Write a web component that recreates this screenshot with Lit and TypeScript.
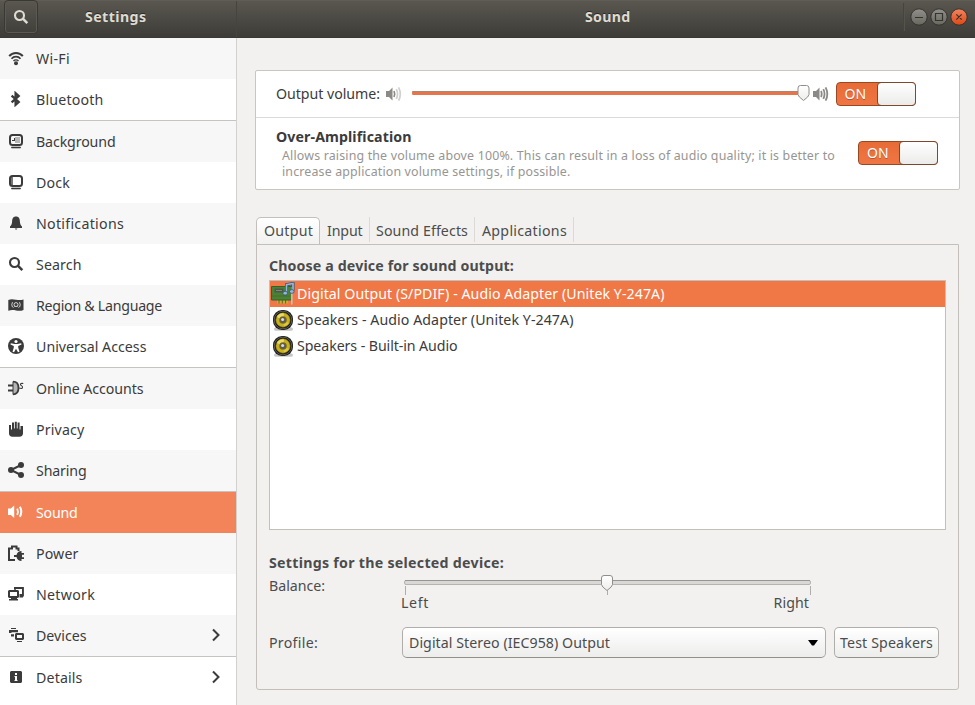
import { LitElement, html, svg, css, nothing } from "lit";
import { customElement, property } from "lit/decorators.js";

/** A single line of text, tracked so that it spans the given width. */
@customElement("fit-label")
class FitLabel extends LitElement {
  @property() text = "";
  @property({ type: Number }) w = 0;
  static styles = css`
    :host { display: inline-block; white-space: pre; flex: none; }
    .t { display: inline-block; }
  `;
  updated() {
    const t = this.renderRoot.querySelector(".t") as HTMLElement;
    t.style.letterSpacing = "0px";
    const natural = t.getBoundingClientRect().width;
    t.style.letterSpacing = (this.w - 1 - natural) / this.text.length + "px";
  }
  render() {
    return html`<span class="t">${this.text}</span>`;
  }
}

const icons: Record<string, unknown> = {
  wifi: svg`<g fill="none" stroke="currentColor"><path d="M1.200 6.200C4.600 2 11.400 2 14.800 6.200" stroke-width="2"/><path d="M3.500 8.700C5.900 5.900 10.100 5.900 12.500 8.700" stroke-width="1.700"/><path d="M5.500 11C6.800 9.400 9.200 9.400 10.500 11" stroke-width="1.300"/></g><circle cx="8" cy="13.200" r="2"/>`,
  bluetooth: svg`<path d="M3.600 4.600 10.700 11 7.600 13.800V2.200L10.700 5 3.600 11.400" fill="none" stroke="currentColor" stroke-width="2.300"/>`,
  background: svg`<rect x="2" y="2" width="12" height="10" rx="2.500" fill="none" stroke="currentColor" stroke-width="2"/><path d="M7 4h5v6H7z" opacity=".35"/><path d="M4 8h3V5H6v2H4z"/><path d="M3.500 14h9v1h-9z" stroke="currentColor" stroke-width=".6"/>`,
  dock: svg`<rect x="2" y="2" width="12" height="10" rx="2.500" fill="none" stroke="currentColor" stroke-width="2"/><path d="M3 3h2v8H3z" opacity=".7"/><path d="M3.500 14h9v1h-9z" stroke="currentColor" stroke-width=".6"/>`,
  bell: svg`<path d="M8 1.500C5 1.500 4.200 3.800 4.100 6.400 4 9.200 3 10.400 2 11.400V13h12v-1.600c-1-1-2-2.200-2.100-5C11.800 3.800 11 1.500 8 1.500z"/><path d="M6.800 13.600h2.600l-.6.900H7.400z"/>`,
  search: svg`<circle cx="6.500" cy="6.500" r="4.500" fill="none" stroke="currentColor" stroke-width="2.100"/><path d="m9.800 9.600 4.500 4.500" stroke="currentColor" stroke-width="2.500"/>`,
  region: svg`<path d="M.3 3C3 1.900 5 2.300 8 2.700s5 .4 7.500-.3V13c-2.500 1-5 1-7.500.5s-5-.6-7.700.2z"/><g fill="none" stroke="#f7f7f7" stroke-width=".8"><circle cx="8" cy="7.600" r="2"/><path d="M4.500 5.200Q3 7.700 4.500 10.200M11.500 5.200q1.500 2.500 0 5M6.500 9.500l-1 1M9.500 9.500l1 1"/></g>`,
  access: svg`<circle cx="8" cy="8" r="8"/><circle cx="8" cy="3.500" r="1.600" fill="#fff"/><path d="M2.800 5.300 6.500 6h3l3.700-.7.3 1.300L10.200 8v1.500l1.300 4.300-1.500.5-2-3.600-2 3.600-1.500-.5L5.800 9.500V8L2.500 6.600z" fill="#fff"/>`,
  online: svg`<path d="M0 5.500h5M0 10.500h5" stroke="currentColor" stroke-width="1.900"/><path d="M5 2c3.800.6 5.300 3.200 5.300 6s-1.500 5.400-5.300 6z" fill="#b5b5b5"/><path d="M5 1.700c3.900 0 5.500 3 5.500 6.300s-1.600 6.300-5.500 6.300" fill="none" stroke="currentColor" stroke-width="1.800"/><path d="M5 1.500v13" stroke="currentColor"/><path d="M15.300 3.500c-2-.5-3 .2-2.800 1.200s2.300 1 2 2.600-1.800 1.300-3.300.8" fill="none" stroke="currentColor" stroke-width="1.100"/>`,
  privacy: svg`<path d="M1 4h2v4.500h1V1.500h2V7.500h.8V.7h2v6.800h.8V1.500h2V8.500h.9V5H15v7.500q-.5 3.300-3.500 3.300h-7Q1 15.500 1 12.500z"/>`,
  sharing: svg`<path d="M13 3 3 8l10 5" fill="none" stroke="currentColor" stroke-width="2"/><circle cx="3" cy="8" r="3"/><circle cx="13" cy="3" r="3"/><circle cx="13" cy="13" r="3"/>`,
  sound: svg`<path d="M0 4.500h2.800L6.200 1.500v12.500L2.800 11H0z"/><path d="M9.200 4.700q1.500 3.100 0 6.200" fill="none" stroke="currentColor" stroke-width="1.800"/><path d="M11.800 2.800q3 5 0 10" fill="none" stroke="currentColor" stroke-width="2"/>`,
  power: svg`<path d="M7 15H1V3.500h3V1.500h4.500v2h2V6" fill="none" stroke="currentColor" stroke-width="2"/><path d="M6 10h2.500Q9.500 6 13.500 6v2H16v1.700h-2v2.600h2V14h-2.500v2Q9.500 15.800 8.500 12H6z"/>`,
  network: svg`<path d="M6 1h9.900v9.500H15v1h-3.500V8H14V3H8v.7H6z"/><path fill-rule="evenodd" d="M1 4h9l1 1v6l-1 1H9v1h1v1.500H1V13h2v-1H1l-1-1V5zm1 2v4h7V6z"/>`,
  devices: svg`<path d="M3 1h5v1H3zM1 3h9v2.300H3.500V6H1zM3 7.300h3v2.200H3z"/><path fill-rule="evenodd" d="M8 6h7l1 1v5l-1 1H8l-1-1V7zm1 2v3h5V8z"/><path d="M9 14h5v1H9z"/>`,
  details: svg`<path fill-rule="evenodd" d="M3 2h10l1 1v10l-1 1H3l-1-1V3zm4 2v2h2V4zM6.500 7v1H7v3h-.5v1h3v-1H9V7z"/>`,
};
const icon = (n: string) => html`<svg class="ico" viewBox="0 0 16 16" fill="currentColor">${icons[n]}</svg>`;

/* icon, label, width, ends a group, opens a sub-page */
const items: [string, string, number, boolean?, boolean?][] = [
  ["wifi", "Wi-Fi", 35], ["bluetooth", "Bluetooth", 68.5, true],
  ["background", "Background", 80.5], ["dock", "Dock", 35], ["bell", "Notifications", 89],
  ["search", "Search", 46.5], ["region", "Region & Language", 127], ["access", "Universal Access", 111.5, true],
  ["online", "Online Accounts", 108.5], ["privacy", "Privacy", 49.500], ["sharing", "Sharing", 51.5, true],
  ["sound", "Sound", 42.5], ["power", "Power", 43.5], ["network", "Network", 60],
  ["devices", "Devices", 51.5, true, true], ["details", "Details", 47.5, false, true],
];

const card = svg`<path d="M6 18h11v3.500H6z" fill="#c9ae30"/><path d="M8 18v3.500m3.300-3.500v3.500m3.300-3.500v3.500" stroke="#555022" stroke-width=".8"/><path d="M.5 4.500h20v13.500H.5z" fill="#4d8034" stroke="#34602a"/><path d="M1 14h18" stroke="#3d6d2b" stroke-width=".8"/><path d="M3.500 6.500h9v4h-9z" fill="#4b5a48"/><path d="M5 8.500h6" stroke="#7f8b78"/><path d="M20.800 5v17.500" stroke="#cdd3cb" stroke-width="1.300"/><path d="M15.500 11V2.700L22 1.500V8.500" fill="none" stroke="#304a66" stroke-width="3"/><path d="M15.500 11V2.700L22 1.500V8.500" fill="none" stroke="#8db8e4" stroke-width="1.700"/><g fill="#8db8e4" stroke="#304a66" stroke-width=".7"><ellipse cx="14.200" cy="11.200" rx="2.300" ry="1.900"/><ellipse cx="20.800" cy="9.500" rx="2.300" ry="1.900"/></g>`;
const speaker = svg`<rect x="2" y="18.500" width="19" height="3.200" rx="1.600" fill="#000" opacity=".22"/><rect x="1" y="1" width="20" height="20" rx="9" fill="#20201e"/><circle cx="11" cy="11" r="8.800" fill="#171714" stroke="#6b6a66" stroke-width=".8"/><circle cx="11" cy="11" r="7.200" fill="#c9b020" stroke="#817019" stroke-width=".6"/><path d="M5 8a6.500 6.500 0 0 1 7-3.500l-1 6.500z" fill="#eadb67"/><path d="M11 11l6 3a6.500 6.500 0 0 1-5 3.400z" fill="#ddc840"/><circle cx="11" cy="11" r="3.800" fill="#7f6d14"/><circle cx="11" cy="11" r="2.900" fill="#5b5b58"/><circle cx="10.600" cy="10.500" r="1.500" fill="#dcdcda"/>`;

const knob = (x: number, y: number) => svg`<path transform="translate(${x} ${y})" d="M3 .5h6Q11.500.5 11.500 3v6.500q0 2-5.500 6Q.5 11.500.5 9.500V3Q.5.500 3 .5z" fill="url(#kg)" stroke="#8f8e8b"/>`;
const grad = svg`<defs><linearGradient id="kg" x1="0" y1="0" x2="0" y2="1"><stop offset="0" stop-color="#fff"/><stop offset="1" stop-color="#ededec"/></linearGradient></defs>`;

@customElement("app-root")
class AppRoot extends LitElement {
  static styles = css`
    :host { display: block; width: 975px; height: 705px; overflow: hidden; background: #f2f1f0; color: #4c4c4c;
      font: 14.2px/20px "Noto Sans", "Open Sans", sans-serif; }
    * { box-sizing: border-box; }
    svg { display: block; flex: none; }
    .bar { height: 38px; display: flex; background: linear-gradient(#59574f, #3d3c38); border-top: 1px solid #5f5d55; border-bottom: 1px solid #3a3935;
      color: #dfdbd2; font-weight: 700; text-shadow: 0 -1px 0 #2b2a27; }
    .bar-left { width: 237px; display: flex; padding-left: 4px; border-right: 1px solid #45443e; }
    .find { width: 34px; height: 34px; margin-top: -1px; border: 1px solid #393833; border-radius: 4px; box-shadow: inset 0 0 0 1px #5b5951;
      display: flex; align-items: center; justify-content: center; }
    .bar .a { margin: 6px 0 0 47px; }
    .bar .b { margin: 6px 0 0 348px; }
    .sep { width: 2px; height: 28px; margin: 2px 0 0 auto; border-left: 1px solid #45443e; border-right: 1px solid #55534c; }
    .win { margin: 7px 7px 0 5px; width: 58px; height: 18px; }
    .body { display: flex; height: 667px; }
    .side { width: 237px; background: #fff; border-right: 1px solid #d3d1cf; color: #3b3b3b; }
    .row { height: 41px; display: flex; align-items: center; padding-left: 8px; background: #f7f7f7; }
    .row.end { height: 42px; border-bottom: 1px solid #c6c4c2; }
    .row.bluetooth, .row.dock, .row.search, .row.access, .row.privacy, .row.network, .row.details { background: #fff; }
    .row.sound { background: #f38459; color: #fff; }
    .ico { width: 16px; height: 16px; }
    .row .ico { margin-top: -1px; }
    .row fit-label { margin-left: 12px; }
    .chev { margin-left: auto; margin-right: 15.5px; margin-top: -1px; }
    .main { flex: 1; padding: 32px 0 0 18px; background: #f2f1f0; }
    .card { width: 705px; height: 120px; background: #fff; border: 1px solid #c9c5c0; border-radius: 2px; color: #3b3b3b; }
    .vol { height: 47px; border-bottom: 1px solid #dcdad8; display: flex; align-items: center; padding-left: 20px; }
    .vol .ico { color: #8c8a86; width: 16px; height: 16px; }
    .vol .lo { margin-left: 5.5px; }
    .vol .hi { margin-left: 1px; }
    .amp { height: 71px; display: flex; padding-left: 20px; }
    .amp .text { width: 582px; padding-top: 9px; display: flex; flex-direction: column; align-items: flex-start; }
    .title { font-weight: 700; }
    .desc { font-size: 12.4px; line-height: 16px; color: #979592; margin-left: 6px; }
    .title + .desc { margin-top: 1px; }
    .switch { width: 80px; height: 24px; border: 1px solid #984923; border-radius: 4px; background: linear-gradient(#e76b35, #ef7644);
      color: #fff; display: flex; align-items: center; padding-left: 8px; flex: none; font-size: 14px; text-shadow: 0 1px 0 #b35630; }
    .handle { width: 39px; height: 24px; margin: 0 -1px 0 auto; border: 1px solid #7f472b; border-radius: 4px; background: linear-gradient(#fff, #ebebea); }
    .vol .switch { margin-left: 7px; }
    .amp .switch { margin-top: 23px; }
    .tabs { display: flex; margin: 27px 0 0 1px; height: 27px; }
    .tab { height: 25px; border-right: 1px solid #dcdad8; padding: 4px 0 0 6px; }
    .tab.on { width: 64px; height: 27px; padding: 3px 0 0 7px; border: 1px solid #c3c0bc; border-bottom: 0; border-radius: 5px 5px 0 0; background: linear-gradient(#fff, #f2f1f0); }
    .in { width: 50px; padding-left: 7px; } .fx { width: 105px; } .ap { width: 99px; padding-left: 7px; }
    .book { width: 703px; height: 446px; margin-left: 1px; border: 1px solid #c3c0bc; border-radius: 0 0 3px 3px; padding: 11px 0 0 12px; }
    .list { width: 677px; height: 250px; margin-top: 4px; border: 1px solid #c3c0bc; background: #fff; color: #3b3b3b; }
    .dev { height: 26px; display: flex; align-items: center; padding-left: 1px; }
    .dev svg { width: 24px; height: 24px; }
    .dev fit-label { margin-left: 2px; }
    .dev.sel { background: #f07746; color: #fff; }
    .sub { margin-top: 23px; height: 20px; }
    .line { display: flex; }
    .balance { margin-top: 3px; height: 51px; }
    .name { width: 132px; }
    .scale { margin-top: -2px; width: 410px; }
    .ends { display: flex; justify-content: space-between; padding-right: 2px; margin-top: -3px; }
    .combo, .button { height: 31px; border: 1px solid #b0aeab; border-bottom-color: #92908d; border-radius: 5px; background: linear-gradient(#fff, #ededec); display: flex; align-items: center; }
    .combo { width: 424px; padding: 0 7px 0 6px; justify-content: space-between; margin-left: 1px; }
    .button { width: 105px; margin-left: 8px; padding-left: 5px; }
    .profile .name { padding-top: 6px; }
  `;

  private onSwitch() {
    return html`<div class="switch"><fit-label text="ON" w="22.5"></fit-label><div class="handle"></div></div>`;
  }

  render() {
    return html`
      <div class="bar">
        <div class="bar-left">
          <div class="find">${icon("search")}</div>
          <fit-label class="a" text="Settings" w="62.5"></fit-label>
        </div>
        <fit-label class="b" text="Sound" w="46.5"></fit-label>
        <div class="sep"></div>
        <svg class="win" viewBox="0 0 58 18">
          <defs>
            <linearGradient id="g" x1="0" y1="0" x2="0" y2="1"><stop offset="0" stop-color="#92908a"/><stop offset="1" stop-color="#67665f"/></linearGradient>
            <linearGradient id="r" x1="0" y1="0" x2="0" y2="1"><stop offset="0" stop-color="#f4845f"/><stop offset="1" stop-color="#dd4814"/></linearGradient>
          </defs>
          <g stroke="#34332f"><circle cx="9" cy="9" r="8.200" fill="url(#g)"/><circle cx="29" cy="9" r="8.200" fill="url(#g)"/><circle cx="49" cy="9" r="8.200" fill="url(#r)"/></g>
          <path d="M5 9.500h8M25.500 5.500h7v7h-7zM46.300 6.300l5.400 5.400m0-5.400-5.400 5.400" fill="none" stroke="#35332e" stroke-width="1.200"/>
        </svg>
      </div>
      <div class="body">
        <nav class="side">
          ${items.map(([i, l, w, end, sub]) => html`<div class="row ${i} ${end ? "end" : ""}">
            ${icon(i)}<fit-label .text=${l} .w=${w}></fit-label>
            ${sub ? html`<svg class="chev" width="10" height="14" viewBox="0 0 10 14"><path d="m2 1.500 5.500 5.500L2 12.500" fill="none" stroke="currentColor" stroke-width="2"/></svg>` : nothing}
          </div>`)}
        </nav>
        <main class="main">
          <section class="card">
            <div class="vol">
              <fit-label text="Output volume:" w="105"></fit-label>
              <svg class="ico lo" viewBox="0 0 16 16" fill="currentColor"><path d="M0 5h3l3.500-3.500v13L3 11H0z"/><g fill="none" stroke="currentColor" stroke-width="1.700"><path d="M8 5q1.400 3 0 6"/><path opacity=".4" d="M10.300 3.200q2.500 4.800 0 9.600M12.600 1.300q3.400 6.700 0 13.400"/></g></svg>
              <svg width="410" height="18" viewBox="401.500 85 410 18">${grad}
                <path d="M412 91h386v4H412q-1-2 0-4z" fill="#e5764b"/><path d="M412 91.500h386" stroke="#b08472"/>${knob(797, 85)}
              </svg>
              <svg class="ico hi" viewBox="0 0 16 16" fill="currentColor"><path d="M0 5h3l3.500-3.500v13L3 11H0z"/><g fill="none" stroke="currentColor" stroke-width="1.800"><path d="M8 5q1.400 3 0 6M10.300 3.200q2.500 4.800 0 9.600M12.600 1.300q3.400 6.700 0 13.400"/></g></svg>
              ${this.onSwitch()}
            </div>
            <div class="amp">
              <div class="text">
                <fit-label class="title" text="Over-Amplification" w="136.5"></fit-label>
                <fit-label class="desc" text="Allows raising the volume above 100%. This can result in a loss of audio quality; it is better to" w="554"></fit-label>
                <fit-label class="desc" text="increase application volume settings, if possible." w="289.5"></fit-label>
              </div>
              ${this.onSwitch()}
            </div>
          </section>
          <div class="tabs">
            <div class="tab on"><fit-label text="Output" w="50"></fit-label></div>
            <div class="tab in"><fit-label text="Input" w="36.5"></fit-label></div>
            <div class="tab fx"><fit-label text="Sound Effects" w="93"></fit-label></div>
            <div class="tab ap"><fit-label text="Applications" w="86"></fit-label></div>
          </div>
          <section class="book">
            <fit-label class="title" text="Choose a device for sound output:" w="246"></fit-label>
            <div class="list">
              <div class="dev sel"><svg viewBox="0 0 24 24">${card}</svg><fit-label text="Digital Output (S/PDIF) - Audio Adapter (Unitek Y-247A)" w="368.5"></fit-label></div>
              <div class="dev"><svg viewBox="-1 -1 24 24">${speaker}</svg><fit-label text="Speakers - Audio Adapter (Unitek Y-247A)" w="277.5"></fit-label></div>
              <div class="dev"><svg viewBox="-1 -1 24 24">${speaker}</svg><fit-label text="Speakers - Built-in Audio" w="161.5"></fit-label></div>
            </div>
            <div class="sub"><fit-label class="title" text="Settings for the selected device:" w="236"></fit-label></div>
            <div class="line balance">
              <div class="name"><fit-label text="Balance:" w="57"></fit-label></div>
              <div class="scale">
                <svg width="411" height="22" viewBox="401 574 411 22">${grad}
                  <rect x="404.500" y="580.500" width="406" height="4" rx="1.500" fill="#d9d8d6" stroke="#b6b4b1"/><path d="M405 580.500h405" stroke="#979592"/><path d="M405.500 586v9M607.500 586v9M810.500 586v9" stroke="#b0aeab"/>${knob(601, 575)}
                </svg>
                <div class="ends"><fit-label text="Left" w="29"></fit-label><fit-label text="Right" w="36.5"></fit-label></div>
              </div>
            </div>
            <div class="line profile">
              <div class="name"><fit-label text="Profile:" w="50"></fit-label></div>
              <div class="combo"><fit-label text="Digital Stereo (IEC958) Output" w="202"></fit-label>
                <svg width="10" height="6" viewBox="0 0 10 6"><path d="M0 0h10L6 5.500H4z" fill="#000"/></svg></div>
              <div class="button"><fit-label text="Test Speakers" w="94"></fit-label></div>
            </div>
          </section>
        </main>
      </div>`;
  }
}
